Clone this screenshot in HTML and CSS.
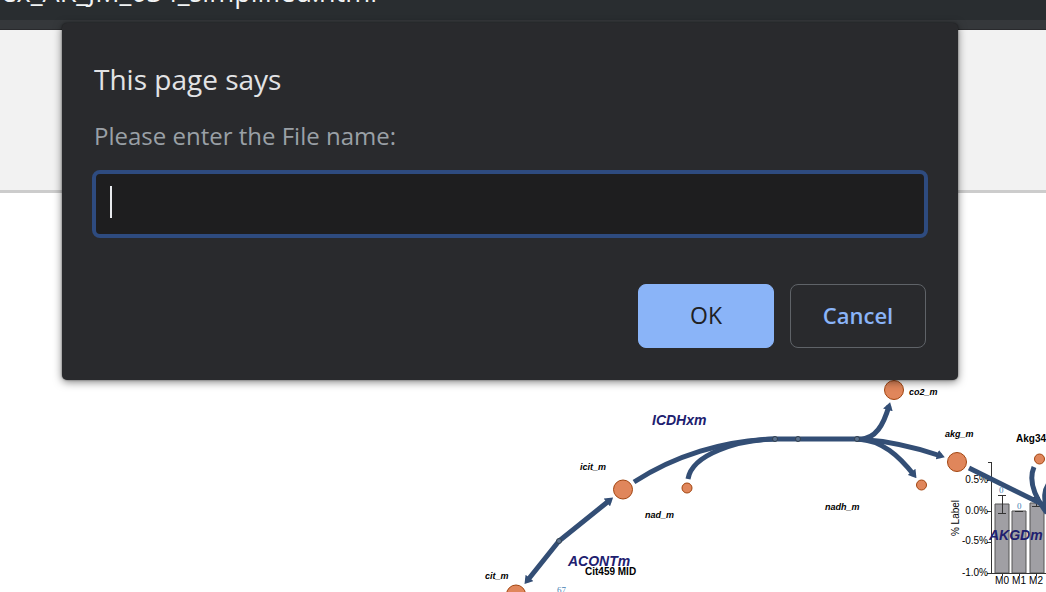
FILE: index.html
```html
<!DOCTYPE html>
<html lang="en">
<head>
<meta charset="utf-8">
<title>index_AK_JM_034_simplified.html</title>
<link rel="stylesheet" href="styles.css">
</head>
<body>
<div class="browser">
  <header class="address-bar"><span class="address">index_AK_JM_034_simplified.html</span></header>
  <div class="bookmarks"></div>
  <section class="page-header"></section>
  <main class="map-area">
    <svg class="map" viewBox="0 193 1046 399" preserveAspectRatio="xMinYMin slice" role="img" aria-label="Metabolic pathway map">
      <defs>
        <marker id="arrow" viewBox="0 0 8 10" refX="4" refY="5" markerWidth="8" markerHeight="10" markerUnits="userSpaceOnUse" orient="auto"><path d="M0 0 8 5 0 10Z" fill="#334e75"/></marker>
        <marker id="arrow-start" viewBox="0 0 8 10" refX="4" refY="5" markerWidth="8" markerHeight="10" markerUnits="userSpaceOnUse" orient="auto-start-reverse"><path d="M0 0 8 5 0 10Z" fill="#334e75"/></marker>
      </defs>
      <g class="chart">
        <path class="bar" d="M995 504h14v69h-14zM1012 511h14v62h-14zM1030 503h14v70h-14z"/>
        <path class="axis" d="M988 462h3v111h-4M987 480h4M987 511h4M987 542h4M991 573h55M1002 573v3M1019 573v3M1036 573v3M1002 495v18M998 495h8M998 513h8M1015 511h8M1036 497v9M1032 497h8M1032 506h8"/>
        <g class="tick" text-anchor="end">
          <text x="988" y="483">0.5%</text>
          <text x="988" y="514">0.0%</text>
          <text x="988" y="544">-0.5%</text>
          <text x="988" y="576">-1.0%</text>
        </g>
        <g class="tick" text-anchor="middle">
          <text x="1002" y="584">M0</text>
          <text x="1019" y="584">M1</text>
          <text x="1036" y="584">M2</text>
          <text transform="translate(959 518) rotate(-90)">% Label</text>
        </g>
        <text class="count" x="999" y="493">0</text>
        <text class="count" x="1017" y="509">0</text>
        <text class="count" x="557" y="593">67</text>
      </g>
      <g class="reaction">
        <path marker-start="url(#arrow-start)" marker-end="url(#arrow)" d="M527 581 559 541 610 500"/>
        <path d="M634 482C674 456 724 440 775 439L857 439"/>
        <path d="M688 479C692 454 738 440 775 439"/>
        <path marker-end="url(#arrow)" d="M857 439C876 441 884 423 889 406"/>
        <path marker-end="url(#arrow)" d="M857 439C889 441 915 447 941 456"/>
        <path marker-end="url(#arrow)" d="M857 439C882 440 899 456 914 475"/>
        <path d="M969 468 1050 508"/>
        <path d="M1034 467C1028 481 1034 496 1047 513"/>
        <path d="M1050 482C1043 490 1044 499 1047 510"/>
      </g>
      <g class="joint">
        <circle cx="559" cy="541" r="2.5"/><circle cx="775" cy="439" r="2.5"/><circle cx="798" cy="439" r="2.5"/><circle cx="857" cy="439" r="2.5"/>
      </g>
      <g class="metabolite">
        <circle cx="894" cy="390" r="9.5"/><circle cx="957" cy="462" r="9.5"/><circle cx="623" cy="489.5" r="9.5"/><circle cx="516" cy="594.5" r="9.5"/>
        <circle cx="687" cy="488" r="5"/><circle cx="921.5" cy="485" r="5"/><circle cx="1039.5" cy="459" r="5"/>
      </g>
      <g class="metabolite-name">
        <text x="909" y="395">co2_m</text>
        <text x="945" y="437">akg_m</text>
        <text x="580" y="470">icit_m</text>
        <text x="645" y="518">nad_m</text>
        <text x="825" y="510">nadh_m</text>
        <text x="485" y="579">cit_m</text>
      </g>
      <g class="reaction-name">
        <text x="652" y="425">ICDHxm</text>
        <text x="568" y="566">ACONTm</text>
        <text x="989" y="540">AKGDm</text>
      </g>
      <g class="chart-title">
        <text x="1016" y="442">Akg346 MID</text>
        <text x="585" y="575">Cit459 MID</text>
      </g>
    </svg>
  </main>
  <form class="dialog" role="dialog" aria-labelledby="dialog-title">
    <h1 class="dialog-title" id="dialog-title">This page says</h1>
    <label class="dialog-label" for="file-name">Please enter the File name:</label>
    <input class="dialog-input" id="file-name" type="text" autocomplete="off" autofocus>
    <div class="dialog-actions">
      <button class="button button-primary" type="submit">OK</button>
      <button class="button" type="button">Cancel</button>
    </div>
    <span class="caret"></span>
  </form>
</div>
</body>
</html>
```
FILE: styles.css
```css
* { box-sizing: border-box; }
body {
  margin: 0;
  background: #fff;
  font-family: "Segoe UI", "Open Sans", "Noto Sans", sans-serif;
}
.browser {
  position: relative;
  display: flex;
  flex-direction: column;
  height: 100vh;
  overflow: hidden;
}
.address-bar {
  display: flex;
  align-items: flex-end;
  justify-content: flex-end;
  flex: 0 0 20px;
  overflow: hidden;
  padding-right: calc(100% - 377px);
  padding-bottom: 10px;
  background: #292d30;
  color: #f1f3f4;
}
.address { font-size: 27px; font-weight: 500; line-height: 36px; white-space: nowrap; }
.bookmarks { flex: 0 0 10px; background: #35383b; border-bottom: 1px solid #292a2d; }
.page-header { flex: 0 0 163px; background: #f2f2f2; border-bottom: 3px solid #ccc; }
.map-area { flex: 1; min-height: 0; }
.map { display: block; width: 100%; height: 100%; font-family: "Liberation Sans", Arial, sans-serif; }

.reaction { fill: none; stroke: #334e75; stroke-width: 5; }
.joint { fill: #5b728f; stroke: #33414f; }
.metabolite { fill: #e0865b; stroke: #a24510; }
.metabolite-name { font-size: 9px; font-style: italic; font-weight: bold; }
.reaction-name { font-size: 14px; font-style: italic; font-weight: bold; fill: #20206f; }
.chart-title { font-size: 10px; font-weight: bold; }
.bar { fill: #a09fa4; stroke: #555; }
.axis { fill: none; stroke: #333; shape-rendering: crispEdges; }
.tick { font-size: 10px; }
.count { font-family: "Liberation Serif", serif; font-size: 9px; fill: #4682b4; }

.dialog {
  position: absolute;
  top: 23px;
  left: 62px;
  right: 88px;
  display: flex;
  flex-direction: column;
  padding: 36px 32px 32px;
  border-radius: 5px;
  background: #292a2d;
  box-shadow: 0 2px 8px rgba(0, 0, 0, .5), 0 0 2px rgba(0, 0, 0, .5);
}
.dialog-title { margin: 0; color: #e2e3e5; font-size: 28px; font-weight: 400; line-height: 40px; }
.dialog-label { margin-top: 20px; color: #9aa0a6; font-size: 24px; line-height: 34px; }
.dialog-input {
  height: 68px;
  margin: 17px -2px 0;
  padding: 0 14px;
  border: 4px solid #2e4b7f;
  border-radius: 8px;
  outline: 0;
  background: #1e1e1f;
  color: #e8eaed;
  caret-color: transparent;
  font: inherit;
  font-size: 24px;
}
.caret {
  position: absolute;
  top: 163px;
  left: 48px;
  width: 2px;
  height: 32px;
  background: #e8eaed;
}
.dialog-actions { display: flex; justify-content: flex-end; gap: 16px; margin-top: 46px; }
.button {
  width: 136px;
  height: 64px;
  padding: 0 0 2px;
  border: 1px solid #5f6368;
  border-radius: 8px;
  background: transparent;
  color: #8ab4f8;
  font: inherit;
  font-size: 22px;
  font-weight: 600;
}
.button-primary { border-color: #8ab4f8; background: #8ab4f8; color: #202124; font-size: 23px; font-weight: 500; }
```
